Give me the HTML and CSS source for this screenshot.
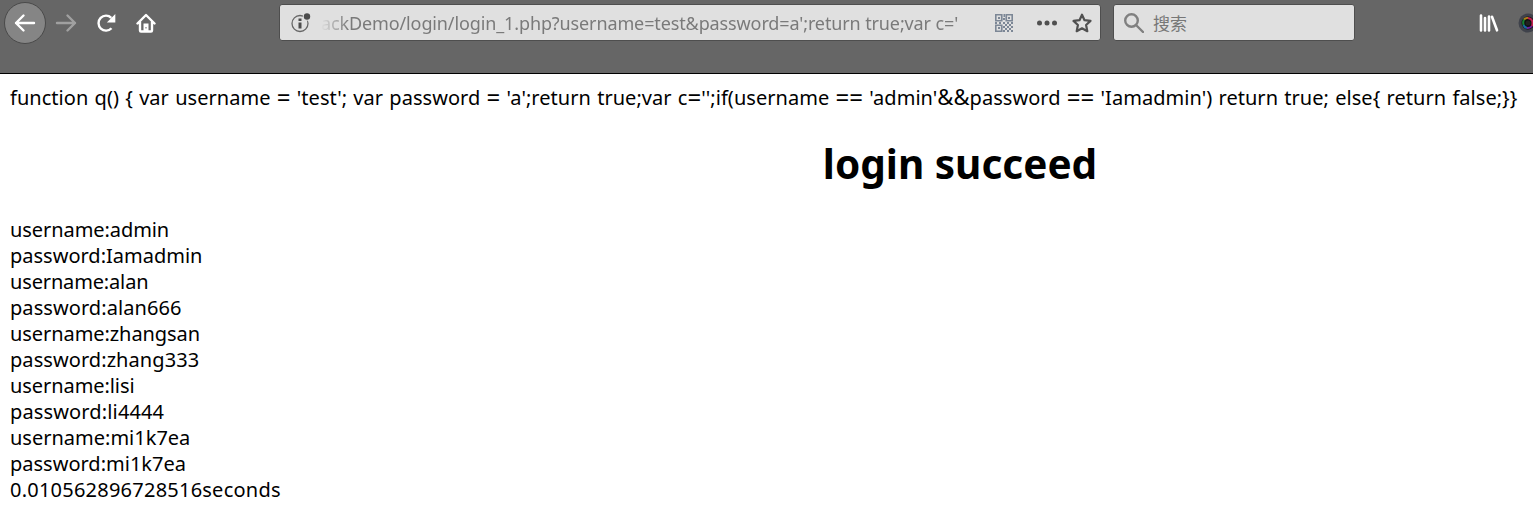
FILE: index.html
```html
<!DOCTYPE html>
<html lang="zh">
<head>
<meta charset="utf-8">
<title>login</title>
<link rel="stylesheet" href="styles.css">
</head>
<body>
<header class="toolbar">
  <nav class="nav">
    <button class="back" aria-label="Back"><svg width="22" height="20" viewBox="0 0 22 20"><path d="M20 10H2M9.500 2.500L2 10l7.500 7.500"/></svg></button>
    <svg class="forward" width="22" height="20" viewBox="0 0 22 20"><path d="M2 10h18M12.500 2.500L20 10l-7.500 7.500"/></svg>
    <svg class="reload" width="20" height="20" viewBox="0 0 20 20"><path d="M15.500 15.300A7.500 7.500 0 1 1 15.300 4.800"/><path class="tip" d="M19.300 1v8.500h-8.500z"/></svg>
    <svg class="home" width="20" height="20" viewBox="0 0 20 20"><path d="M1.500 10.500L10 2l8.500 8.500M4 9v8.500q0 1 1 1h10q1 0 1-1V9"/><path class="door" d="M7.500 19v-8.500h5V19zM9.500 14v1.500h1V14z"/></svg>
  </nav>
  <div class="address">
    <svg class="info" width="20" height="20" viewBox="0 0 20 20"><circle cx="9" cy="10.500" r="8" fill="none" stroke="#666" stroke-width="1.300"/><circle cx="16" cy="3.500" r="4.200" fill="#e0e0e0"/><circle cx="16" cy="3.500" r="3.200" fill="#4c4c4c"/><path d="M7.500 5.500h3v2.500h-3zM7.500 9.500h3v6h-3z" fill="#4c4c4c"/></svg>
    <div class="url"><span>ackDemo/login/login_1.php?username=test&amp;password=a';return true;var c='</span></div>
    <svg class="qr" width="18" height="18" viewBox="0 0 18 18"><path fill="none" stroke="#7c8796" stroke-width="1.700" d="M.75.75h6v6h-6zM11.250.75h6v6h-6zM.75 11.250h6v6h-6z"/><path fill="#7c8796" d="M3 3h2v2H3zM13 3h2v2h-2zM3 13h2v2H3zM8.500 0h1.500v3H8.500zM8 4h2v2H8zM8 8h2v2H8zM0 8h2v2H0zM4 8h2v2H4zM12 8h2v2h-2zM16 8h2v2h-2zM10 10h2v2h-2zM14 10h2v2h-2zM8 12h2v2H8zM12 12h2v2h-2zM16 12h2v2h-2zM10 14h2v2h-2zM14 14h2v2h-2zM8 16h2v2H8zM12 16h2v2h-2zM16 16h2v2h-2z"/></svg>
    <svg class="dots" width="20" height="6" viewBox="0 0 20 6"><circle cx="2.500" cy="3" r="2.500"/><circle cx="10" cy="3" r="2.500"/><circle cx="17.500" cy="3" r="2.500"/></svg>
    <svg class="star" width="20" height="20" viewBox="0 0 20 20"><path d="M10 1.700l2.500 5.500 6 .7-4.400 4.100 1.200 6.200L10 15.300l-5.300 2.900 1.200-6.200L1.500 7.900l6-.7z"/></svg>
  </div>
  <div class="search">
    <svg width="20" height="20" viewBox="0 0 20 20"><circle cx="7.500" cy="7.500" r="6.300"/><path d="M12 12l7 7"/></svg>
    <span>搜索</span>
  </div>
  <svg class="library" width="20" height="20" viewBox="0 0 20 20"><path d="M2 2.500v15M6 5v12.500M10 3.500v14M13 3.800l5 13.500"/></svg>
  <svg class="addon" width="15" height="20" viewBox="0 0 15 20"><circle cx="10" cy="10" r="9.500" fill="#3f424b"/><circle cx="10" cy="10" r="6.500" fill="#101010"/><g fill="none" stroke-width="2"><path stroke="#b08018" d="M6 6.500Q8 4.500 10 5"/><path stroke="#168030" d="M5.500 12Q4.500 9 6 6.500"/><path stroke="#1868a0" d="M9 15q-2.500-.7-3.500-3"/><path stroke="#7020a0" d="M14 13q-2 2.500-5 2"/><path stroke="#c02050" d="M10 5q6 1 4 8"/></g><circle cx="10" cy="10" r="2.500" fill="#222"/></svg>
</header>
<main class="page">
  <p class="code">function q() { var username <span class="eq">=</span> 'test'; var password <span class="eq">=</span> 'a';return true;var c<span class="eq">=</span>'';if(username <span class="eq">==</span> 'admin'<span class="amp">&amp;&amp;</span>password <span class="eq">==</span> 'Iamadmin') return true; else{ return false;}}</p>
  <h1 class="title">login succeed</h1>
  <div class="results">
    <div class="r1">username:admin</div>
    <div>password:Iamadmin</div>
    <div class="r1 r3">username:alan</div>
    <div class="r4">password:alan666</div>
    <div class="r1">username:zhangsan</div>
    <div class="r4">password:zhang333</div>
    <div class="r1">username:lisi</div>
    <div class="r8">password:li4444</div>
    <div>username:mi1k7ea</div>
    <div>password:mi1k7ea</div>
    <div class="r11">0.010562896728516seconds</div>
  </div>
</main>
</body>
</html>
```
FILE: styles.css
```css
* { box-sizing: border-box; }
html { overflow: hidden; }
body { margin: 0; height: 524px; overflow: hidden; background: #fff; color: #000; font-family: "Noto Sans", "Noto Sans CJK SC", sans-serif; }
svg { display: block; flex: none; }
.toolbar { display: flex; align-items: flex-start; height: 74px; padding-top: 4px; background: #666; border-bottom: 1px solid #000; }
.nav { display: flex; align-items: center; flex: none; width: 279px; height: 38px; padding-left: 4px; fill: none; stroke: #fff; stroke-width: 2.4px; stroke-linecap: round; stroke-linejoin: round; }
.back { display: flex; align-items: center; justify-content: center; width: 42px; height: 42px; flex: none; padding: 0; border: 1px solid #4a4a4a; border-radius: 50%; background: #858585; }
.back svg { stroke: #fff; }
.forward { margin-left: 9px; stroke: #a0a0a0; }
.reload { margin-left: 19px; stroke-linecap: butt; }
.reload .tip { fill: #fff; stroke: none; }
.home { margin-left: 20px; }
.home .door { fill: #fff; fill-rule: evenodd; stroke: none; }
.address, .search { display: flex; flex: none; align-items: center; height: 37px; background: #e0e0e0; border: 1px solid #4e4e4e; border-radius: 3px; }
.address { width: 822px; padding-left: 11px; }
.url { flex: none; width: 674px; margin-left: 10px; overflow: hidden; white-space: nowrap; font-size: 18px; letter-spacing: -.12px; line-height: 32px; color: #7a7a7a; -webkit-mask-image: linear-gradient(to right, transparent 0, #000 28px); mask-image: linear-gradient(to right, transparent 0, #000 28px); }
.dots { margin-left: 24px; fill: #505050; }
.star { margin-left: 15px; fill: none; stroke: #505050; stroke-width: 2.2px; stroke-linejoin: round; }
.search { width: 242px; margin-left: 12px; padding-left: 10px; font-family: "Noto Sans CJK SC", sans-serif; font-size: 17px; color: #777; }
.search svg { fill: none; stroke: #808080; stroke-width: 2.4px; stroke-linecap: round; }
.search span { margin-left: 9px; line-height: 30px; }
.library { margin: 9px 0 0 124px; fill: none; stroke: #fff; stroke-width: 2.6px; stroke-linecap: round; }
.addon { margin: 9px 0 0 19px; }
.page { padding: 11px 10px; font-size: 20px; line-height: 26px; }
.code { height: 26px; margin: 0; white-space: nowrap; word-spacing: 1px; letter-spacing: .04px; }
.code .eq { font-size: 24px; line-height: 1; vertical-align: -1px; }
.code .amp { letter-spacing: 0; font-size: 22px; line-height: 1; }
.title { margin: 26px 0 27px 387px; text-align: center; font-size: 40.5px; line-height: 53px; font-weight: 700; }
.r1 { letter-spacing: -.07px; }
.r3 { letter-spacing: -.15px; }
.r4 { letter-spacing: .07px; }
.r8 { letter-spacing: .14px; }
.r11 { letter-spacing: .23px; }
```
